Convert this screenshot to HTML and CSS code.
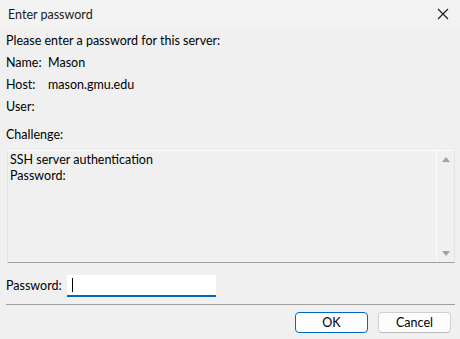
FILE: index.html
```html
<!DOCTYPE html>
<html lang="en">
<head>
    <meta charset="UTF-8">
    <title>Enter password</title>
    <link rel="stylesheet" href="styles.css">
</head>
<body>
    <div class="dialog">
        <div class="titlebar">
            <span class="title">Enter password</span>
            <span class="close">
                <svg width="12" height="12" viewBox="0 0 12 12">
                    <path d="M1 1 L11 11 M11 1 L1 11" stroke="#1a1a1a" stroke-width="1.1" fill="none"/>
                </svg>
            </span>
        </div>

        <div class="content">
            <div class="intro">Please enter a password for this server:</div>
            <div class="row"><span class="label">Name:</span><span>Mason</span></div>
            <div class="row"><span class="label">Host:</span><span>mason.gmu.edu</span></div>
            <div class="row"><span class="label">User:</span><span></span></div>
            <div class="challenge-label">Challenge:</div>

            <div class="challenge">
                <div class="challenge-text">
                    <div>SSH server authentication</div>
                    <div>Password:</div>
                </div>
                <div class="scrollbar">
                    <span class="arrow up"></span>
                    <span class="arrow down"></span>
                </div>
            </div>

            <div class="pass-row">
                <label for="pw">Password:</label>
                <div class="pass-box"><span class="caret"></span></div>
            </div>
        </div>

        <div class="footer">
            <button class="btn primary">OK</button>
            <button class="btn">Cancel</button>
        </div>
    </div>
</body>
</html>
```

FILE: styles.css
```css
body {
    margin: 0;
    padding: 0;
    width: 460px;
    height: 339px;
    overflow: hidden;
    background-color: #f0f0f0;
    color: #000;
    font-family: 'Segoe UI', Lato, sans-serif;
    font-size: 12.5px;
}

.dialog {
    display: flex;
    flex-direction: column;
    height: 100%;
}

.titlebar {
    display: flex;
    align-items: center;
    justify-content: space-between;
    height: 28px;
    padding: 0 0 0 8px;
    background-color: #f3f3f3;
    color: #1a1a1a;
}

.close {
    display: flex;
    align-items: center;
    justify-content: center;
    width: 30px;
    height: 28px;
    margin-right: 2px;
}

.content {
    padding: 5px 5px 0 6px;
    line-height: 16px;
}

.intro {
    margin-bottom: 6px;
}

.row {
    display: flex;
    height: 16px;
    margin-bottom: 6px;
}

.row .label {
    width: 42px;
}

.challenge-label {
    margin-top: 12px;
    margin-bottom: 7px;
}

.challenge {
    display: flex;
    height: 113px;
    box-sizing: border-box;
    margin-left: 1px;
    border: 1px solid #e4e4e4;
    border-top-color: #fcfcfc;
    border-bottom-color: #a0a0a0;
}

.challenge-text {
    flex: 1;
    padding: 1px 2px;
    line-height: 16px;
}

.scrollbar {
    position: relative;
    width: 17px;
    border-left: 1px solid #fcfcfc;
}

.arrow {
    position: absolute;
    left: 5px;
    width: 0;
    height: 0;
    border-left: 4px solid transparent;
    border-right: 4px solid transparent;
}

.arrow.up {
    top: 6px;
    border-bottom: 5px solid #a3a3a3;
}

.arrow.down {
    bottom: 6px;
    border-top: 5px solid #a3a3a3;
}

.pass-row {
    display: flex;
    align-items: center;
    margin-top: 12px;
}

.pass-row label {
    width: 61px;
}

.pass-box {
    display: flex;
    align-items: center;
    width: 149px;
    height: 22px;
    background-color: #fff;
    border-bottom: 2px solid #0067c0;
    box-sizing: border-box;
    padding-left: 5px;
}

.caret {
    width: 1px;
    height: 14px;
    background-color: #000;
}

.footer {
    display: flex;
    justify-content: flex-end;
    gap: 10px;
    margin: 7px 5px 0 6px;
    padding: 7px 4px 0 0;
    border-top: 1px solid #a0a0a0;
}

.btn {
    width: 73px;
    height: 21px;
    padding: 0;
    font-family: inherit;
    font-size: 12.5px;
    color: #000;
    background-color: #fdfdfd;
    border: 1px solid #d0d0d0;
    border-bottom-color: #bcbcbc;
    border-radius: 4px;
}

.btn.primary {
    border-color: #0067c0;
}
```
